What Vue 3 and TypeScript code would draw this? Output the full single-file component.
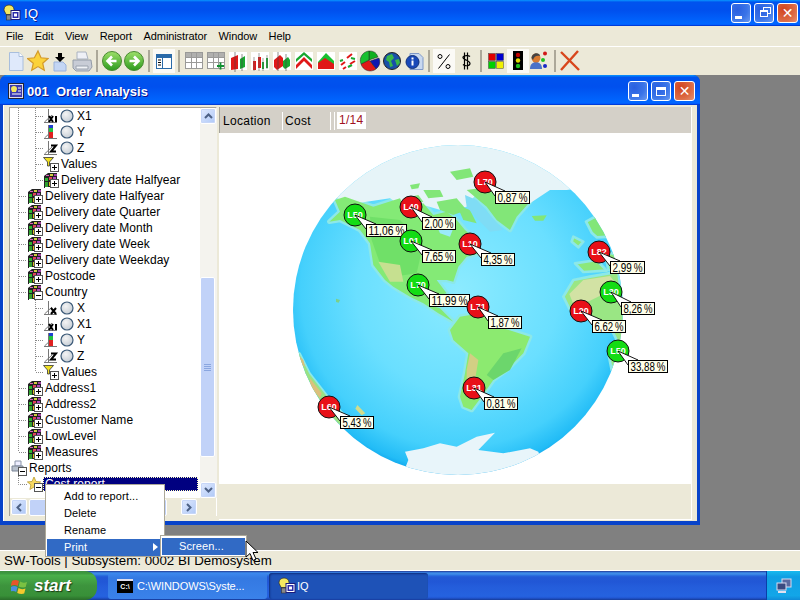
<script setup lang="ts">
type Row = { lv: number; icon: string; label: string; radio?: boolean; last?: boolean; sel?: boolean };

const menus = ['File', 'Edit', 'View', 'Report', 'Administrator', 'Window', 'Help'];

// null = separator
const tools: ({ icon: string; on?: boolean } | null)[] = [
  { icon: 'doc' }, { icon: 'star' }, { icon: 'import' }, { icon: 'printer' }, null,
  { icon: 'back' }, { icon: 'fwd' }, null,
  { icon: 'panel', on: true }, null,
  { icon: 'grid' }, { icon: 'gridplus' },
  { icon: 'c1' }, { icon: 'c2' }, { icon: 'c3' }, { icon: 'c4' }, { icon: 'c5' }, { icon: 'c6' },
  { icon: 'pie' }, { icon: 'globe' }, { icon: 'info' }, null,
  { icon: 'percent', on: true }, { icon: 'dollar' }, null,
  { icon: 'colors' }, { icon: 'traffic', on: true }, { icon: 'people' }, null,
  { icon: 'cross' },
];

const rows: Row[] = [
  { lv: 3, icon: 'ax1', label: 'X1', radio: true },
  { lv: 3, icon: 'ay', label: 'Y', radio: true },
  { lv: 3, icon: 'az', label: 'Z', radio: true },
  { lv: 3, icon: 'funnel', label: 'Values' },
  { lv: 3, icon: 'cube', label: 'Delivery date Halfyear', last: true },
  { lv: 2, icon: 'cube', label: 'Delivery date Halfyear' },
  { lv: 2, icon: 'cube', label: 'Delivery date Quarter' },
  { lv: 2, icon: 'cube', label: 'Delivery date Month' },
  { lv: 2, icon: 'cube', label: 'Delivery date Week' },
  { lv: 2, icon: 'cube', label: 'Delivery date Weekday' },
  { lv: 2, icon: 'cube', label: 'Postcode' },
  { lv: 2, icon: 'cubeminus', label: 'Country' },
  { lv: 3, icon: 'ax', label: 'X', radio: true },
  { lv: 3, icon: 'ax1', label: 'X1', radio: true },
  { lv: 3, icon: 'ay', label: 'Y', radio: true },
  { lv: 3, icon: 'az', label: 'Z', radio: true },
  { lv: 3, icon: 'funnel', label: 'Values', last: true },
  { lv: 2, icon: 'cube', label: 'Address1' },
  { lv: 2, icon: 'cube', label: 'Address2' },
  { lv: 2, icon: 'cube', label: 'Customer Name' },
  { lv: 2, icon: 'cube', label: 'LowLevel' },
  { lv: 2, icon: 'cube', label: 'Measures', last: true },
  { lv: 1, icon: 'reports', label: 'Reports' },
  { lv: 4, icon: 'starminus', label: 'Cost report', sel: true },
];

const guideWidth = (r: Row) => ({ 1: 1, 2: 17, 3: 33, 4: 17 } as Record<number, number>)[r.lv];

const guidePath = (r: Row) => {
  if (r.lv === 3) return `M8.5 0V16M25.5 0V${r.last ? 8 : 16}M26 8.5H33`;
  if (r.lv === 2) return `M8.5 0V${r.last ? 8 : 16}M9 8.5H17`;
  if (r.lv === 4) return 'M8.5 0V8.5H17';
  return '';
};

const childTitle = '001  Order Analysis';

const markers = [
  { x: 485, y: 182, code: 'L70', ok: false, bx: 495, by: 191, w: 34, text: '0,87\u2009%' },
  { x: 411, y: 207, code: 'L40', ok: false, bx: 422, by: 217, w: 33, text: '2,00\u2009%' },
  { x: 355, y: 215, code: 'L50', ok: true, bx: 366, by: 224, w: 40, text: '11,06\u2009%' },
  { x: 411, y: 241, code: 'L01', ok: true, bx: 422, by: 250, w: 33, text: '7,65\u2009%' },
  { x: 470, y: 244, code: 'L10', ok: false, bx: 481, by: 253, w: 33, text: '4,35\u2009%' },
  { x: 418, y: 285, code: 'L70', ok: true, bx: 429, by: 294, w: 40, text: '11,99\u2009%' },
  { x: 478, y: 307, code: 'L71', ok: false, bx: 488, by: 316, w: 33, text: '1,87\u2009%' },
  { x: 599, y: 252, code: 'L82', ok: false, bx: 610, by: 261, w: 34, text: '2,99\u2009%' },
  { x: 611, y: 292, code: 'L30', ok: true, bx: 621, by: 302, w: 33, text: '8,26\u2009%' },
  { x: 581, y: 311, code: 'L20', ok: false, bx: 592, by: 320, w: 33, text: '6,62\u2009%' },
  { x: 618, y: 351, code: 'L50', ok: true, bx: 628, by: 360, w: 39, text: '33,88\u2009%' },
  { x: 474, y: 388, code: 'L31', ok: false, bx: 484, by: 397, w: 33, text: '0,81\u2009%' },
  { x: 329, y: 407, code: 'L60', ok: false, bx: 340, by: 416, w: 33, text: '5,43\u2009%' },
];
</script>

<template>
  <div class="screen">
    <!-- icon sprite -->
    <svg class="sprite" width="0" height="0">
      <defs>
        <radialGradient id="ocean" cx="0.5" cy="0.44" r="0.56">
          <stop offset="0" stop-color="#8cebff" />
          <stop offset="0.55" stop-color="#6adfff" />
          <stop offset="0.85" stop-color="#45d0fc" />
          <stop offset="0.97" stop-color="#22bcf6" />
          <stop offset="1" stop-color="#12a8ee" />
        </radialGradient>
        <radialGradient id="radio" cx="0.4" cy="0.35" r="0.7">
          <stop offset="0" stop-color="#f4f4f4" />
          <stop offset="1" stop-color="#c4ccd4" />
        </radialGradient>
        <linearGradient id="greenball" x1="0" y1="0" x2="0" y2="1">
          <stop offset="0" stop-color="#9ee06a" />
          <stop offset="1" stop-color="#2c9a1e" />
        </linearGradient>
        <clipPath id="globeclip"><circle cx="504" cy="510" r="495" /></clipPath>

        <symbol id="plusbox" viewBox="0 0 16 16">
          <rect x="7.500" y="7.500" width="8" height="8" fill="#fff" stroke="#555" />
          <path d="M9 11.500h5M11.500 9v5" stroke="#000" />
        </symbol>
        <symbol id="minusbox" viewBox="0 0 16 16">
          <rect x="7.500" y="7.500" width="8" height="8" fill="#fff" stroke="#555" />
          <path d="M9 11.500h5" stroke="#000" />
        </symbol>
        <symbol id="cubebase" viewBox="0 0 16 16">
          <path d="M1 4L5 1H14V11H1Z" fill="#222" />
          <path d="M2 6h3v3H2z" fill="#2fb52f" />
          <path d="M6 5h3v3H6z" fill="#e0405a" />
          <path d="M10 5h3v3h-3z" fill="#b04ac0" />
          <path d="M3 3h3v1H3z" fill="#e060c0" />
          <path d="M7 2h3v2H7z" fill="#d0d040" />
          <path d="M11 2h3v2h-3z" fill="#a040a0" />
          <path d="M2 10h3v5H2z" fill="#30a030" />
          <path d="M1 9h1v7H1z" fill="#222" />
          <path d="M5 9h3v6H5z" fill="#222" />
          <path d="M6 10h2v4H6z" fill="#d8c020" />
        </symbol>
        <symbol id="cube" viewBox="0 0 16 16"><use href="#cubebase" /><use href="#plusbox" /></symbol>
        <symbol id="cubeminus" viewBox="0 0 16 16"><use href="#cubebase" /><use href="#minusbox" /></symbol>
        <symbol id="funnel" viewBox="0 0 16 16">
          <path d="M0.500 1.500H10.500L6.500 6V10H4.500V6Z" fill="#f0e020" stroke="#333" stroke-width="0.800" />
          <use href="#plusbox" />
        </symbol>
        <symbol id="axes" viewBox="0 0 16 16">
          <path d="M5.500 1V14M1 14.500H14M1.500 14L9 7" stroke="#777" fill="none" />
        </symbol>
        <symbol id="ax" viewBox="0 0 16 16">
          <use href="#axes" />
          <path d="M8 8l5 6M13 8l-5 6" stroke="#000" stroke-width="2" />
        </symbol>
        <symbol id="ax1" viewBox="0 0 16 16">
          <use href="#axes" />
          <path d="M6 8l4 6M10 8l-4 6M13 8v6" stroke="#000" stroke-width="2" />
        </symbol>
        <symbol id="ay" viewBox="0 0 16 16">
          <use href="#axes" />
          <rect x="6" y="1" width="4" height="3" fill="#2040d0" />
          <rect x="6" y="4" width="4" height="4" fill="#20c040" />
          <rect x="6" y="8" width="4" height="6" fill="#e02020" />
        </symbol>
        <symbol id="az" viewBox="0 0 16 16">
          <use href="#axes" />
          <path d="M8 5.500h5L8 11.500h5" stroke="#000" stroke-width="2" fill="none" />
        </symbol>
        <symbol id="reports" viewBox="0 0 16 16">
          <path d="M4 1h6v5H4z" fill="#eef" stroke="#8a94a8" />
          <path d="M1 6h11v5H1z" fill="#b8c0cc" stroke="#7a8496" />
          <use href="#minusbox" />
        </symbol>
        <symbol id="starminus" viewBox="0 0 16 16">
          <path d="M7 1l2 4.500 4.600.4-3.500 3 1 4.600L7 11l-4.100 2.500 1-4.600-3.500-3 4.600-.4z" fill="#f6d860" stroke="#b89a30" stroke-width="0.800" />
          <use href="#minusbox" />
        </symbol>

        <symbol id="doc" viewBox="0 0 22 24">
          <path d="M4.500 3.500H14L18 7.500V21.500H4.500Z" fill="#dfe9fb" stroke="#a8bedd" />
          <path d="M14 3.500V7.500H18" fill="#fff" stroke="#a8bedd" />
        </symbol>
        <symbol id="star" viewBox="0 0 22 24">
          <path d="M11 2l3 6.800 7 .7-5.300 4.700 1.600 7.100-6.300-3.700-6.300 3.700 1.600-7.100L.4 9.500l7-.7z" fill="#fbd23a" stroke="#d49a2a" stroke-width="1.200" />
        </symbol>
        <symbol id="import" viewBox="0 0 22 24">
          <path d="M5 13h9l3 3v6H5z" fill="#c4d6f4" stroke="#9ab2dc" />
          <path d="M9 4h4v4h3l-5 5-5-5h3z" fill="#000" />
        </symbol>
        <symbol id="printer" viewBox="0 0 22 24">
          <path d="M6 3h9l2 7H6z" fill="#eef0f6" stroke="#aab2c0" />
          <path d="M2 11h18l1 7-3 4H5l-3-3z" fill="#c8ccd6" stroke="#949ca8" />
          <path d="M5 17h12v3H5z" fill="#f0f2f6" stroke="#9aa2ae" />
        </symbol>
        <symbol id="back" viewBox="0 0 22 24">
          <circle cx="11" cy="12" r="9.500" fill="url(#greenball)" stroke="#4a8a32" />
          <path d="M15.500 12H7M11 7.500L6.500 12 11 16.500" fill="none" stroke="#fff" stroke-width="2.600" />
        </symbol>
        <symbol id="fwd" viewBox="0 0 22 24">
          <circle cx="11" cy="12" r="9.500" fill="url(#greenball)" stroke="#4a8a32" />
          <path d="M6.500 12H15M11 7.500L15.500 12 11 16.500" fill="none" stroke="#fff" stroke-width="2.600" />
        </symbol>
        <symbol id="panel" viewBox="0 0 22 24">
          <rect x="3.500" y="5.500" width="15" height="14" fill="#fff" stroke="#2a6aa8" />
          <path d="M3.500 6h15v3h-15z" fill="#2a6aa8" />
          <path d="M9.500 9v10" stroke="#2a6aa8" />
          <path d="M5 11h3M5 13.500h3M5 16h3" stroke="#000" />
        </symbol>
        <symbol id="grid" viewBox="0 0 22 24">
          <rect x="2.500" y="3.500" width="17" height="16" fill="#fff" stroke="#9a9a98" />
          <path d="M3 4h16v4H3z" fill="#b0b0ae" />
          <path d="M8.500 4v15M13.500 4v15M3 8.500h16M3 13.500h16" stroke="#9a9a98" />
        </symbol>
        <symbol id="gridplus" viewBox="0 0 22 24">
          <use href="#grid" />
          <path d="M15.500 13.500v7M12 17h7" stroke="#109030" stroke-width="1.800" />
        </symbol>
        <symbol id="c1" viewBox="0 0 22 24">
          <rect x="2" y="3" width="18" height="18" fill="#fff" />
          <path d="M4 9l7-3v14l-7 1z" fill="#e01818" />
          <path d="M13 10l5-3v11l-5 2z" fill="#18a830" />
          <path d="M8 3v20M15 5v17" stroke="#444" stroke-width=".6" />
        </symbol>
        <symbol id="c2" viewBox="0 0 22 24">
          <rect x="2" y="3" width="18" height="18" fill="#fff" />
          <path d="M4 12h3v9H4zM9 8h3v11H9z" fill="#e01818" />
          <path d="M13 13h2v7h-2zM17 9h2v10h-2z" fill="#18a830" />
          <path d="M5 8v14M10 4v18M14 9v13M18 6v14" stroke="#666" stroke-width=".6" />
        </symbol>
        <symbol id="c3" viewBox="0 0 22 24">
          <rect x="2" y="3" width="18" height="18" fill="#fff" />
          <path d="M3 11l6-5 3 3v8l-6 4-3-3z" fill="#e01818" />
          <path d="M12 12l5-4 2 3v6l-5 3-2-2z" fill="#18a830" />
          <path d="M7 3v19M15 5v17" stroke="#444" stroke-width=".6" />
        </symbol>
        <symbol id="c4" viewBox="0 0 22 24">
          <rect x="2" y="3" width="18" height="18" fill="#fff" />
          <path d="M3 13L11 6l8 7v-3L11 3 3 10z" fill="#18a830" />
          <path d="M3 20L11 12l8 8v-4l-8-8-8 8z" fill="#e01818" />
        </symbol>
        <symbol id="c5" viewBox="0 0 22 24">
          <rect x="2" y="3" width="18" height="18" fill="#fff" />
          <path d="M3 13L11 4l8 8v4H3z" fill="#18c030" />
          <path d="M3 14L10 9l9 6v5H3z" fill="#e01818" />
        </symbol>
        <symbol id="c6" viewBox="0 0 22 24">
          <rect x="2" y="3" width="18" height="18" fill="#fff" />
          <path d="M4 16l4-3M10 9l5-4M6 20l3-2M13 15l5-3" stroke="#e01818" stroke-width="2" />
          <path d="M3 12l3-1M14 9l4 1M11 18l4-2" stroke="#18a830" stroke-width="2" />
        </symbol>
        <symbol id="pie" viewBox="0 0 22 24">
          <path d="M10 11L10 2A9 9 0 0 1 19 8Z" fill="#10b020" stroke="#222" stroke-width=".5" />
          <path d="M11 12L20 9A9.500 9.500 0 0 1 17 20Z" fill="#1018b0" stroke="#222" stroke-width=".5" />
          <path d="M10 11L17 20A9.500 9.500 0 0 1 2 15Z" fill="#e01818" stroke="#222" stroke-width=".5" />
          <path d="M10 11L2 15A9.500 9.500 0 0 1 10 2Z" fill="#18c030" stroke="#222" stroke-width=".5" />
        </symbol>
        <symbol id="globe" viewBox="0 0 22 24">
          <circle cx="11" cy="12" r="8.500" fill="#1850a8" stroke="#222" />
          <path d="M6 7l5-2 2 4-3 3 2 5-3 1-1-5-3-2zM14 11l4-1 1 4-3 3z" fill="#38b848" />
        </symbol>
        <symbol id="info" viewBox="0 0 22 24">
          <path d="M7 4.500H16L20 8.500V20.500H7Z" fill="#c8d8f0" stroke="#7f99c8" />
          <circle cx="9.500" cy="13" r="6.500" fill="#1848b8" stroke="#10307a" />
          <rect x="8.500" y="8.500" width="2" height="2" fill="#fff" />
          <rect x="8.500" y="11.500" width="2" height="5" fill="#fff" />
        </symbol>
        <symbol id="percent" viewBox="0 0 22 24">
          <path d="M5.500 19.500L16.500 5.500" stroke="#000" fill="none" />
          <circle cx="7" cy="7.500" r="2" fill="none" stroke="#000" />
          <circle cx="15" cy="17.500" r="2" fill="none" stroke="#000" />
        </symbol>
        <symbol id="dollar" viewBox="0 0 22 24">
          <path d="M15 7.500c-1-1-6-1.500-7 .5-1 3 7 3 7 6.500 0 2.500-5 3-7 1M9.500 3.500v17M12.500 3.500v17" fill="none" stroke="#000" stroke-width="1.200" />
        </symbol>
        <symbol id="colors" viewBox="0 0 22 24">
          <rect x="3.500" y="4.500" width="7" height="7" fill="#e00000" stroke="#444" stroke-width=".5" />
          <rect x="11.500" y="4.500" width="7" height="7" fill="#0000d0" stroke="#444" stroke-width=".5" />
          <rect x="3.500" y="12.500" width="7" height="7" fill="#00d000" stroke="#444" stroke-width=".5" />
          <rect x="11.500" y="12.500" width="7" height="7" fill="#f0f000" stroke="#444" stroke-width=".5" />
        </symbol>
        <symbol id="traffic" viewBox="0 0 22 24">
          <rect x="6" y="2" width="10" height="19" fill="#000" />
          <circle cx="11" cy="6" r="2.200" fill="#c00000" />
          <circle cx="11" cy="11.500" r="2.200" fill="#e8e000" />
          <circle cx="11" cy="17" r="2.200" fill="#20c020" />
        </symbol>
        <symbol id="people" viewBox="0 0 22 24">
          <path d="M1 20c0-5 3-7 6-7s6 2 6 7z" fill="#4a72c8" />
          <circle cx="7" cy="9" r="4.500" fill="#d97a30" />
          <path d="M2.500 9C3 3 11 3 11 7 8 6 5 7 4 11z" fill="#444" />
          <circle cx="16" cy="4.500" r="2" fill="#d01818" />
          <circle cx="14" cy="11" r="2" fill="#20c020" />
          <circle cx="16" cy="17" r="2" fill="#1828c8" />
        </symbol>
        <symbol id="cross" viewBox="0 0 22 24">
          <path d="M2 3l18 18M19 2L2 21" stroke="#d8461c" stroke-width="2.400" fill="none" />
        </symbol>
        <symbol id="iqlogo" viewBox="0 0 18 18">
          <path d="M6 1c-3 0-5 2-5 4.500 0 2 1.500 3 2 5h6c.5-2 2-3 2-5C11 3 9 1 6 1z" fill="#f4e860" stroke="#333" stroke-width=".8" />
          <rect x="3.500" y="11" width="5" height="5" fill="#888" stroke="#333" stroke-width=".6" />
          <rect x="8" y="6.500" width="9" height="9" fill="#fff" stroke="#1a1a7a" />
          <rect x="9.500" y="8" width="6" height="6" fill="#2a2aa8" />
          <path d="M11 9.500h3v3h-3z" fill="#fff" />
        </symbol>
      </defs>
    </svg>

    <header class="titlebar main-title">
      <svg class="title-icon" width="18" height="18"><use href="#iqlogo" /></svg>
      <span class="main-title-text">IQ</span>
      <div class="caption">
        <span class="capbtn"><i class="glyph-min"></i></span>
        <span class="capbtn"><i class="glyph-restore"></i></span>
        <span class="capbtn close"><i class="glyph-x">✕</i></span>
      </div>
    </header>

    <nav class="menubar">
      <span v-for="m in menus" :key="m">{{ m }}</span>
    </nav>

    <div class="toolbar">
      <template v-for="(t, i) in tools" :key="i">
        <span v-if="t" class="tool" :class="{ on: t.on }">
          <svg width="22" height="24"><use :href="'#' + t.icon" /></svg>
        </span>
        <span v-else class="tool-sep"></span>
      </template>
    </div>

    <main class="mdi">
      <section class="child">
        <header class="titlebar child-title">
          <svg class="child-icon" width="16" height="16">
            <rect x="0.500" y="0.500" width="15" height="15" fill="#dde" stroke="#223" />
            <rect x="2" y="2" width="12" height="12" fill="#3a3ab0" />
            <path d="M6 3c-2 0-3 1-3 3 0 1 1 2 1 3h4c0-1 1-2 1-3 0-2-1-3-3-3z" fill="#f4e860" />
            <path d="M10 5h3M10 8h3M4 11h9" stroke="#fff" />
          </svg>
          <span class="child-title-text">{{ childTitle }}</span>
          <div class="caption">
            <span class="capbtn"><i class="glyph-min"></i></span>
            <span class="capbtn"><i class="glyph-max"></i></span>
            <span class="capbtn close"><i class="glyph-x">✕</i></span>
          </div>
        </header>

        <div class="child-body">
          <aside class="tree-pane">
            <div class="tree-top">
              <div class="tree">
                <div v-for="(r, i) in rows" :key="i" class="row">
                  <svg class="guide" :width="guideWidth(r)" height="16">
                    <path :d="guidePath(r)" stroke="#8a8a8a" stroke-dasharray="1 1" fill="none" />
                  </svg>
                  <svg width="16" height="16" class="row-icon"><use :href="'#' + r.icon" /></svg>
                  <svg v-if="r.radio" class="radio" width="14" height="14">
                    <circle cx="7" cy="7" r="6" fill="url(#radio)" stroke="#3c5a78" stroke-width="1.200" />
                  </svg>
                  <span class="label" :class="{ sel: r.sel, 'after-radio': r.radio }">{{ r.label }}</span>
                </div>
              </div>
              <div class="vscroll">
                <span class="sbtn"><svg width="9" height="6"><path d="M1 5l3.500-3.500L8 5" fill="none" stroke="#4d6185" stroke-width="2" /></svg></span>
                <div class="vtrack">
                  <div class="vthumb"><i></i><i></i><i></i><i></i></div>
                </div>
                <span class="sbtn"><svg width="9" height="6"><path d="M1 1l3.500 3.500L8 1" fill="none" stroke="#4d6185" stroke-width="2" /></svg></span>
              </div>
            </div>
            <div class="hscroll">
              <span class="sbtn"><svg width="6" height="9"><path d="M5 1L1.500 4.500 5 8" fill="none" stroke="#4d6185" stroke-width="2" /></svg></span>
              <div class="hthumb"></div>
              <span class="sbtn"><svg width="6" height="9"><path d="M1 1l3.500 3.500L1 8" fill="none" stroke="#4d6185" stroke-width="2" /></svg></span>
            </div>
          </aside>

          <div class="chart-pane">
            <div class="chart-head">
              <span class="head-location">Location</span>
              <span class="head-cost">Cost</span>
              <span class="head-sep"></span>
              <span class="head-page">1/14</span>
            </div>
            <svg class="chart" width="472" height="351" viewBox="219 133 472 351">
              <g transform="translate(290 140) scale(0.33333)">
                <circle cx="504" cy="510" r="495" fill="url(#ocean)" />
                <g clip-path="url(#globeclip)">
                  <!-- shallow water halo -->
                  <g fill="#8ce8e8" stroke="#8ce8e8" stroke-width="14" stroke-linejoin="round">
                    <path d="M118 245L150 215 135 180 165 170 250 200 330 175 345 205 400 190 430 225 470 215 500 240 525 270 560 300 570 340 530 350 505 380 490 425 470 420 440 420 470 460 430 470 415 495 450 505 490 545 445 520 400 490 360 470 310 440 285 420 250 375 240 310 210 270 150 240Z" />
                    <path d="M480 570L510 530 570 520 640 565 720 590 700 640 650 690 610 720 575 770 545 810 520 800 510 770 525 700 535 640 490 600Z" />
                    <path d="M530 150L600 140 700 170 720 185 680 230 660 270 620 240 590 200Z" />
                  </g>
                  <!-- polar cap -->
                  <path d="M100 0H900V140L830 150 780 150 720 190 620 150 560 160 530 200 470 215 400 195 345 205 300 175 200 190 140 175Z" fill="#e6f4f8" />
                  <!-- north america -->
                  <path d="M118 245L150 215 135 180 165 170 250 200 330 175 345 205 400 190 430 225 470 215 500 240 525 270 560 300 570 340 530 350 505 380 490 425 470 420 440 420 470 460 430 470 415 495 450 505 490 545 445 520 400 490 360 470 310 440 285 420 250 375 240 310 210 270 150 240Z" fill="#84ea76" />
                  <path d="M240 230L330 240 400 310 380 400 310 410 270 370 245 300Z" fill="#70e068" />
                  <path d="M265 365L330 375 340 425 300 425Z" fill="#c6e090" />
                  <path d="M430 235L465 235 490 265 480 290 450 280Z" fill="#9aeaf8" />
                  <!-- arctic islands -->
                  <g fill="#82e678">
                    <path d="M345 175L385 165 400 185 355 195Z" />
                    <path d="M400 150L450 150 460 170 415 175Z" />
                    <path d="M440 185L500 175 530 210 490 225 450 210Z" />
                    <path d="M360 135L390 130 385 145 365 148Z" />
                    <path d="M480 95L540 85 550 110 500 120Z" />
                    <path d="M500 195L540 210 560 250 520 240Z" />
                  </g>
                  <!-- baffin bay -->
                  <path d="M525 165L560 180 600 225 640 270 600 275 560 235 530 200Z" fill="#7fdcf5" />
                  <!-- greenland -->
                  <path d="M530 150L600 140 700 170 720 185 680 230 660 270 620 240 590 200Z" fill="#82e678" />
                  <path d="M725 228L770 226 760 242 735 242Z" fill="#82e678" />
                  <!-- south america -->
                  <path d="M480 570L510 530 570 520 640 565 720 590 700 640 650 690 610 720 575 770 545 810 520 800 510 770 525 700 535 640 490 600Z" fill="#8cea70" />
                  <path d="M640 640L695 625 660 690 610 720 590 705Z" fill="#6cd66c" />
                  <path d="M540 640L565 660 555 720 530 730 530 690Z" fill="#d2cf84" />
                  <!-- africa, europe -->
                  <g stroke="#8ce8e8" stroke-width="8" stroke-linejoin="round">
                    <path d="M820 470L850 420 900 410 985 395 1010 600 965 690 955 640 980 600 960 560 910 540 880 520 840 510Z" fill="#9ae684" />
                    <path d="M855 370L920 360 950 392 880 396Z" fill="#8ce87a" />
                    <path d="M850 290L880 305 865 322 845 305Z" fill="#8ce87a" />
                    <path d="M888 245L925 225 965 290 920 292 905 278Z" fill="#82e678" />
                    <path d="M945 335L985 345 990 395 955 390Z" fill="#8ce87a" />
                  </g>
                  <path d="M838 462L880 420 960 408 985 440 900 482 850 492Z" fill="#d2e2a4" />
                  <!-- australia, nz -->
                  <path d="M0 620L30 640 60 700 130 790 190 850 170 862 115 842 70 775 30 710 0 680Z" fill="#9ae284" stroke="#8ce8e8" stroke-width="5" />
                  <path d="M20 640L40 660 45 680 25 670Z" fill="#dcc07c" />
                  <path d="M60 715L95 760 90 775 60 740Z" fill="#dcc07c" />
                  <path d="M202 795L226 820 215 826 196 806Z" fill="#d0dc8c" />
                  <path d="M138 476L150 480 146 488 138 486Z" fill="#7cd088" />
                  <!-- antarctica -->
                  <path d="M345 935L400 925 450 910 500 920 560 890 615 878 565 930 640 940 720 925 745 935 800 1100H300L355 960Z" fill="#e8f5fa" />
                </g>
              </g>
              <g v-for="(m, i) in markers" :key="i">
                <circle :cx="m.x" :cy="m.y" r="11" :fill="m.ok ? '#14dc14' : '#e81018'" stroke="#111" />
                <text class="code" :x="m.x" :y="m.y + 3">{{ m.code }}</text>
                <polygon :points="`${m.x},${m.y} ${m.bx},${m.by + 5} ${m.bx + 10},${m.by}`" fill="#fff" stroke="#000" stroke-width="0.900" />
                <rect :x="m.bx + 0.500" :y="m.by + 0.500" :width="m.w" height="12" fill="#ffffea" stroke="#000" />
                <text class="pct" :x="m.bx + 2.500" :y="m.by + 11" :textLength="m.w - 4" lengthAdjust="spacingAndGlyphs">{{ m.text }}</text>
              </g>
            </svg>
            <div class="chart-foot"></div>
          </div>
        </div>
      </section>
    </main>

    <footer class="statusbar">SW-Tools | Subsystem: 0002 BI Demosystem</footer>

    <div class="taskbar">
      <div class="start">
        <svg width="18" height="18" viewBox="0 0 18 18">
          <path d="M1 4q3-2 7 0l-1.300 5q-3-2-7 0z" fill="#e8552a" />
          <path d="M9 4.500q3 2 7 .5l-1.300 5q-3 1-7-.5z" fill="#7ac142" />
          <path d="M0 10q3-2 6.500 0l-1.300 5q-3-2-7 0z" fill="#4a8fe0" />
          <path d="M7.500 11q3 2 7 .5l-1.300 5q-3 1-7-.5z" fill="#f5c92e" />
        </svg>
        <span>start</span>
      </div>
      <div class="task">
        <span class="cmd-icon">C:\</span>
        <span>C:\WINDOWS\Syste...</span>
      </div>
      <div class="task active">
        <svg width="18" height="18"><use href="#iqlogo" /></svg>
        <span>IQ</span>
      </div>
      <div class="tray">
        <svg width="16" height="16" viewBox="0 0 16 16">
          <rect x="6" y="1" width="9" height="8" fill="#5a6aa0" stroke="#d8dcf0" />
          <rect x="1" y="5" width="9" height="7" fill="#3a4a80" stroke="#d8dcf0" />
          <path d="M2 13h8v2H2z" fill="#e0e0f0" />
        </svg>
      </div>
    </div>

    <!-- overlays -->
    <div class="ctx">
      <div class="ctx-item">Add to report...</div>
      <div class="ctx-item">Delete</div>
      <div class="ctx-item">Rename</div>
      <div class="ctx-item hot">Print<span class="arrow"></span></div>
    </div>
    <div class="ctx sub">
      <div class="ctx-item hot">Screen...</div>
    </div>
    <svg class="pointer" width="14" height="22" viewBox="0 0 14 22">
      <path d="M1 1V17L5 13.500 8 20.500 11 19 8 12.500H13Z" fill="#fff" stroke="#000" />
    </svg>
  </div>
</template>

<style scoped>
.screen {
  position: relative;
  width: 800px;
  height: 600px;
  overflow: hidden;
  display: flex;
  flex-direction: column;
  font-family: 'Liberation Sans', Arial, sans-serif;
  font-size: 12px;
  color: #000;
  background: #ece9d8;
}

.sprite {
  position: absolute;
}

.titlebar {
  display: flex;
  align-items: center;
  color: #fff;
  flex: none;
  background: linear-gradient(#0997ff 0, #0053ee 8%, #0050ee 40%, #0066ff 88%, #0066ff 93%, #005bff 95%, #003dd7 96%, #003dd7 100%);
}

.main-title {
  height: 26px;
  padding: 0 2px 0 3px;
}

.title-icon {
  flex: none;
}

.main-title-text {
  margin-left: 3px;
  font-size: 13px;
  letter-spacing: 0.3px;
  text-shadow: 1px 1px 0 #0f1089;
}

.caption {
  margin-left: auto;
  display: flex;
  gap: 3px;
}

.capbtn {
  width: 20px;
  height: 20px;
  box-sizing: border-box;
  border: 1px solid #fff;
  border-radius: 3px;
  display: flex;
  align-items: center;
  justify-content: center;
  background: radial-gradient(circle at 30% 30%, #2a5fe0 0, #3a74e8 55%, #6a9af0 100%);
}

.capbtn.close {
  width: 21px;
  background: radial-gradient(circle at 30% 30%, #d2441f 0, #dc6a44 60%, #e69274 100%);
}

.glyph-min {
  display: block;
  width: 7px;
  height: 3px;
  background: #fff;
  margin: 8px 5px 0 0;
}

.glyph-max {
  display: block;
  width: 10px;
  height: 9px;
  border: 1px solid #fff;
  border-top-width: 3px;
  box-sizing: border-box;
}

.glyph-restore {
  display: block;
  width: 8px;
  height: 7px;
  border: 1px solid #fff;
  border-top-width: 2px;
  box-sizing: border-box;
  box-shadow: 3px -3px 0 -1px #3a74e8, 3px -3px 0 0 #fff;
}

.glyph-x {
  font-style: normal;
  font-weight: bold;
  font-size: 14px;
  line-height: 1;
  font-family: 'DejaVu Sans', sans-serif;
}

.menubar {
  height: 20px;
  flex: none;
  display: flex;
  align-items: center;
  gap: 11.500px;
  padding-left: 6px;
  font-size: 11px;
  letter-spacing: -0.100px;
  background: #ece9d8;
  border-bottom: 1px solid #fff;
}

.toolbar {
  height: 28px;
  flex: none;
  display: flex;
  align-items: center;
  padding-left: 5px;
  background: #ece9d8;
}

.tool {
  width: 22px;
  height: 24px;
  flex: none;
  box-sizing: border-box;
}

.tool svg {
  display: block;
}

.tool.on {
  background: #fbfaf6;
}

.tool-sep {
  width: 8px;
  flex: none;
  height: 22px;
  background: linear-gradient(#aca899, #aca899) center / 2px 100% no-repeat;
}

.mdi {
  flex: 1;
  min-height: 0;
  background: #808080;
}

.child {
  width: 700px;
  height: 450px;
  display: flex;
  flex-direction: column;
  border-radius: 7px 7px 0 0;
  overflow: hidden;
  background: #0843c9;
}

.child-title {
  height: 30px;
  box-sizing: border-box;
  padding: 2px 5px 0 8px;
}

.child-icon {
  flex: none;
}

.child-title-text {
  margin-left: 3px;
  font-size: 13px;
  font-weight: bold;
  white-space: pre;
  text-shadow: 1px 1px 0 #0f1089;
}

.child-body {
  flex: 1;
  min-height: 0;
  margin: 0 3px 4px 3px;
  padding: 2px 6px 5px 6px;
  display: flex;
  gap: 2px;
  background: #ece9d8;
  border-left: 1px solid #fff;
}

.tree-pane {
  width: 208px;
  flex: none;
  box-sizing: border-box;
  display: flex;
  flex-direction: column;
  border: 1px solid #a5a39a;
  border-bottom: none;
  border-right-color: #fff;
  margin-left: -1px;
  background: #ece9d8;
}

.tree-top {
  height: 390px;
  display: flex;
  flex: none;
  background: #fff;
}

.tree {
  width: 190px;
  overflow: hidden;
  flex: none;
}

.row {
  height: 16px;
  display: flex;
  align-items: center;
  white-space: nowrap;
  letter-spacing: 0.060px;
}

.guide,
.row-icon,
.radio {
  flex: none;
}

.radio {
  margin-left: 1px;
}

.label {
  margin-left: 2px;
  line-height: 16px;
}

.label.after-radio {
  margin-left: 3px;
}

.label.sel {
  flex: 1;
  margin-left: 0;
  margin-right: 2px;
  padding-left: 2px;
  height: 14px;
  line-height: 14px;
  background: #000080;
  color: #fff;
  outline: 1px dotted #ffffc0;
  outline-offset: -1px;
}

.vscroll {
  width: 17px;
  flex: none;
  display: flex;
  flex-direction: column;
  background: #f4f3ee;
}

.sbtn {
  width: 16px;
  height: 16px;
  flex: none;
  border: 1px solid #fff;
  box-sizing: border-box;
  border-radius: 2px;
  background: linear-gradient(135deg, #e1eafe, #aec8f7);
  display: flex;
  align-items: center;
  justify-content: center;
  box-shadow: inset 0 0 0 1px #c6d6f8;
}

.vtrack {
  flex: 1;
  display: flex;
  flex-direction: column;
  padding-top: 153px;
}

.vthumb {
  width: 15px;
  height: 180px;
  border: 1px solid #fff;
  box-sizing: border-box;
  border-radius: 2px;
  background: #c1d2f8;
  display: flex;
  flex-direction: column;
  align-items: center;
  justify-content: center;
  gap: 1px;
}

.vthumb i {
  width: 7px;
  height: 1px;
  background: #8aa6e0;
}

.hscroll {
  height: 17px;
  margin-top: 1px;
  display: flex;
  gap: 2px;
  width: 186px;
  padding-left: 1px;
}

.hthumb {
  flex: 1;
  margin-right: 12px;
  background: #c1d2f8;
  border: 1px solid #fff;
  border-radius: 2px;
}

.chart-pane {
  width: 472px;
  flex: none;
  display: flex;
  flex-direction: column;
  border-right: 1px solid #fff;
  border-bottom: 1px solid #fff;
  margin-bottom: -4px;
}

.chart-head {
  height: 26px;
  flex: none;
  box-sizing: border-box;
  display: flex;
  align-items: center;
  background: #d4d0c8;
  font-size: 12px;
  letter-spacing: 0.300px;
  border-left: 1px solid #a5a39a;
  padding: 1px 0 0 3px;
}

.head-location {
  width: 59px;
  height: 18px;
  line-height: 18px;
}

.head-cost {
  width: 45px;
  height: 18px;
  line-height: 18px;
  padding-left: 2px;
  border-left: 1px solid #fff;
  border-right: 1px solid #fff;
}

.head-sep {
  width: 1px;
  height: 18px;
  margin-left: 3px;
  background: #fff;
}

.head-page {
  width: 27px;
  height: 17px;
  line-height: 17px;
  padding-left: 2px;
  margin-left: 2px;
  color: #a01020;
  background: #fff;
}

.chart {
  display: block;
  flex: none;
  background: #fff;
}

.code {
  fill: #fff;
  font-size: 9px;
  font-weight: bold;
  text-anchor: middle;
}

.pct {
  fill: #000;
  font-size: 12px;
}

.chart-foot {
  flex: 1;
  background: #ece9d8;
}

.statusbar {
  height: 20px;
  flex: none;
  box-sizing: border-box;
  border-top: 1px solid #fff;
  padding-left: 4px;
  line-height: 20px;
  font-size: 13.300px;
  background: #ece9d8;
  white-space: nowrap;
}

.taskbar {
  height: 30px;
  flex: none;
  display: flex;
  align-items: stretch;
  background: linear-gradient(#1f2f86 0, #3165c4 3%, #3682e5 6%, #4490e6 10%, #3883e5 12%, #2b71e0 15%, #2663da 18%, #235bd6 20%, #2258d5 23%, #2157d6 38%, #245ddb 54%, #2562df 86%, #245fdc 89%, #2158d4 92%, #1d4ec0 95%, #1941a5 98%);
  border-top: 1px solid #fff;
  box-sizing: border-box;
  color: #fff;
}

.start {
  width: 97px;
  flex: none;
  display: flex;
  align-items: center;
  gap: 5px;
  padding-left: 11px;
  box-sizing: border-box;
  font-size: 17px;
  font-weight: bold;
  font-style: italic;
  border-radius: 0 12px 12px 0;
  text-shadow: 1px 1px 1px #1a3a12;
  background: linear-gradient(#3f8f3f 0, #3c9a40 8%, #4ab04a 15%, #3d943d 50%, #389038 85%, #2a6d2a 100%);
}

.task {
  width: 159px;
  flex: none;
  margin: 2px 0 1px 11px;
  padding-left: 9px;
  box-sizing: border-box;
  display: flex;
  align-items: center;
  gap: 4px;
  border-radius: 3px;
  background: linear-gradient(#3c88ee, #3479e2 20%, #3a82ea);
  white-space: nowrap;
  font-size: 11px;
  letter-spacing: -0.100px;
}

.task.active {
  margin-left: 2px;
  background: #1e52b7;
  box-shadow: inset 1px 1px 2px #0f2f80;
  gap: 1px;
}

.cmd-icon {
  width: 16px;
  height: 12px;
  flex: none;
  background: #000;
  border-top: 2px solid #dde;
  font-size: 7px;
  line-height: 11px;
  font-weight: bold;
  letter-spacing: 0;
  text-align: center;
}

.tray {
  margin-left: auto;
  width: 33px;
  flex: none;
  display: flex;
  align-items: center;
  justify-content: center;
  border-left: 1px solid #0a3fa8;
  background: linear-gradient(#18b9ee, #0f9fe4 20%, #12a6e8 85%, #0f8bd8);
}

.ctx {
  position: absolute;
  left: 45px;
  top: 484px;
  width: 120px;
  height: 73px;
  box-sizing: border-box;
  padding: 3px 1px 1px 1px;
  border: 1px solid #aca899;
  background: #fff;
  font-size: 11px;
  letter-spacing: 0.100px;
}

.ctx-item {
  height: 17px;
  line-height: 17px;
  padding-left: 17px;
  position: relative;
}

.ctx-item.hot {
  background: #316ac5;
  color: #fff;
}

.arrow {
  position: absolute;
  right: 5px;
  top: 4px;
  border-left: 5px solid #fff;
  border-top: 4px solid transparent;
  border-bottom: 4px solid transparent;
}

.ctx.sub {
  left: 160px;
  top: 535px;
  width: 87px;
  height: 22px;
  padding: 2px 1px 1px 1px;
}

.pointer {
  position: absolute;
  left: 245px;
  top: 540px;
}
</style>

<style>
html,
body {
  margin: 0;
  padding: 0;
}
</style>
